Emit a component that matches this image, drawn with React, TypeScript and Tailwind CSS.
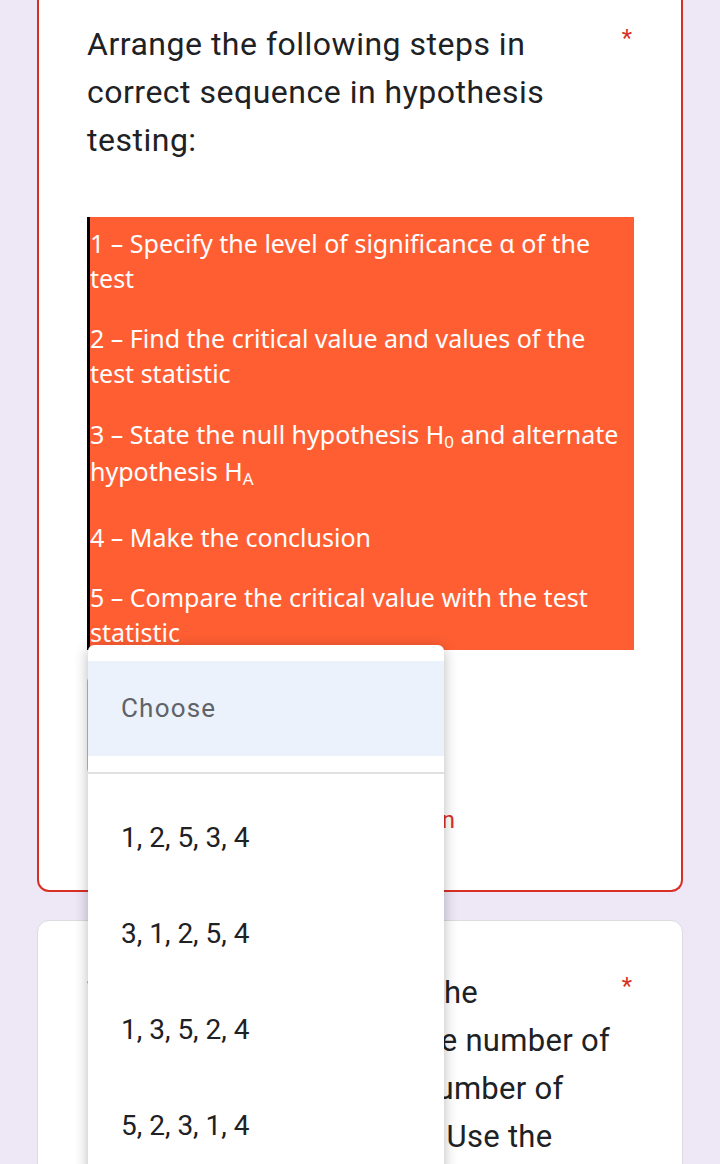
import { AlertCircle } from 'lucide-react';

const options = ['1, 2, 5, 3, 4', '3, 1, 2, 5, 4', '1, 3, 5, 2, 4', '5, 2, 3, 1, 4'];

const questionFont = { fontFamily: 'Roboto, "Liberation Sans", sans-serif' };

export default function App() {
  return (
    <div
      className="relative h-[1164px] overflow-hidden bg-[#ede7f6] px-[37px]"
      style={questionFont}
    >
      {/* current question card, scrolled so its top is off screen */}
      <div className="rounded-b-[12px] border-2 border-t-0 border-[#d93025] bg-white px-[48px] pt-[20px] pb-[48px]">
        <div className="flex items-start justify-between">
          <h2 className="w-[500px] text-[32px] leading-[48px] tracking-[0.5px] text-[#202124]">
            Arrange the following steps in correct sequence in hypothesis testing:
          </h2>
          <span className="mr-[1px] mt-[2px] text-[24px] leading-[32px] text-[#d93025]">*</span>
        </div>

        <div
          className="mt-[53px] -mr-[1px] border-l-[3px] border-black bg-[#ff5e33] pt-[9px] text-[25px] leading-[35px] text-white"
          style={{ fontFamily: '"Noto Sans", "Open Sans", sans-serif' }}
        >
          <p>1 – Specify the level of significance α of the test</p>
          <p className="mt-[25px]">2 – Find the critical value and values of the test statistic</p>
          <p className="mt-[25px] leading-[37px]">
            3 – State the null hypothesis H<sub className="text-[17px]">0</sub> and alternate hypothesis H
            <sub className="text-[17px]">A</sub>
          </p>
          <p className="mt-[30px]">4 – Make the conclusion</p>
          <p className="mt-[25px]">5 – Compare the critical value with the test statistic</p>
        </div>

        {/* closed select, covered by the open menu */}
        <div className="mt-[27px] h-[96px] w-[356px] rounded-[4px] border border-[#bdbdbd]" />

        <div className="mt-[25px] flex h-[44px] items-center gap-[39px] text-[24px] text-[#d93025]">
          <AlertCircle className="h-[48px] w-[48px]" />
          <span>This is a required question</span>
        </div>
      </div>

      {/* next question card */}
      <div className="mt-[28px] rounded-t-[12px] border border-[#dadce0] bg-white px-[49px] pt-[48px] pb-[40px]">
        <div className="flex items-start justify-between">
          <h2 className="whitespace-nowrap text-[31px] leading-[48px] tracking-[0.3px] text-[#202124]">
            The tables below shows the
            <br />
            of observed cases and the number of
            <br />
            expected ones, and the number of
            <br />
            degrees of freedom as 4. Use the
          </h2>
          <span className="mr-[1px] mt-[1px] text-[24px] leading-[32px] text-[#d93025]">*</span>
        </div>
      </div>

      {/* open dropdown menu */}
      <div className="absolute left-[88px] top-[645px] w-[356px] rounded-t-[6px] bg-white pt-[16px] shadow-[0_3px_14px_rgba(0,0,0,0.28)]">
        <div className="flex h-[95px] items-center bg-[#ebf2fc] px-[33px] text-[26px] tracking-[1.2px] text-[#5f6368]">
          Choose
        </div>
        <div className="mt-[16px] h-[2px] bg-[#e0e0e0]" />
        <div className="pt-[16px]">
          {options.map((o) => (
            <div key={o} className="flex h-[96px] items-center px-[33px] text-[28px] text-[#202124]">
              {o}
            </div>
          ))}
        </div>
      </div>
    </div>
  );
}
